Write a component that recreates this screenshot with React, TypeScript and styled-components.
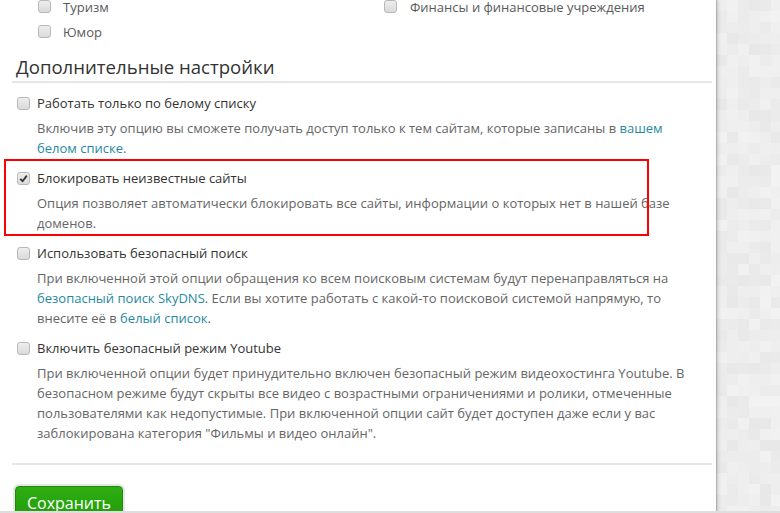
import React from "react";
import styled, { createGlobalStyle } from "styled-components";

const Global = createGlobalStyle`
  html, body { margin: 0; padding: 0; background: #fff; }
  body { width: 780px; height: 513px; overflow: hidden; font-family: "Open Sans", "Liberation Sans", sans-serif; }
`;

const Page = styled.div`
  display: flex;
  flex-direction: column;
  width: 780px;
  height: 513px;
`;

const Main = styled.div`
  display: flex;
  height: 511px;
  overflow: hidden;
`;

const Panel = styled.div`
  width: 716px;
  flex: none;
  background: #fff;
  box-shadow: 1px 0 1px rgba(0, 0, 0, 0.18), 3px 0 3px rgba(0, 0, 0, 0.1);
  position: relative;
  z-index: 1;
  padding: 0 4px 0 12px;
  box-sizing: border-box;
`;

const Backdrop = styled.div`
  flex: 1;
  background: #ebebeb;
  overflow: hidden;
  svg { display: block; }
`;

const BottomLine = styled.div`
  height: 2px;
  background: #dedede;
`;

const CatGrid = styled.div`
  display: grid;
  grid-template-columns: 346px 1fr;
  margin-top: -6px;
  padding-left: 26px;
`;

const CatItem = styled.label<{ $gap: number }>`
  display: flex;
  align-items: center;
  gap: ${(p) => p.$gap}px;
  height: 25px;
  font-size: 13px;
  color: #5a5a5a;
`;

const Box = styled.span`
  width: 11px;
  height: 11px;
  flex: none;
  border: 1px solid #b8b8b8;
  border-radius: 3px;
  background: linear-gradient(#eeeeee, #dadada);
  display: flex;
  align-items: center;
  justify-content: center;
  svg { display: block; }
`;

const Heading = styled.h2`
  margin: 0;
  padding: 9px 0 0 4px;
  height: 39px;
  box-sizing: border-box;
  font-size: 18.6px;
  font-weight: 400;
  color: #333;
  line-height: 28px;
  border-bottom: 2px solid #e6e6e6;
`;

const Options = styled.div`
  display: flex;
  flex-direction: column;
  padding: 3px 0 17px 0;
  border-bottom: 2px solid #e6e6e6;
`;

const Option = styled.div`
  position: relative;
  padding: 7px 0 3px 5px;
`;

const Highlight = styled.div`
  position: absolute;
  left: -8px;
  top: -2px;
  bottom: 0;
  right: 63px;
  border: 2.5px solid #ff0000;
  pointer-events: none;
`;

const OptLabel = styled.label`
  display: flex;
  align-items: center;
  gap: 7px;
  height: 20px;
  font-size: 13px;
  color: #333;
`;

const Desc = styled.p`
  margin: 5px 10px 0 20px;
  font-size: 13px;
  line-height: 20px;
  color: #666;
`;

const Link = styled.a`
  color: #1f8aa0;
  text-decoration: none;
`;

const ButtonRow = styled.div`
  padding: 21px 0 0 3px;
`;

const SaveButton = styled.button`
  font-family: "Open Sans", "Liberation Sans", sans-serif;
  font-size: 16px;
  color: #fff;
  background: linear-gradient(#2fae12, #1f9a08);
  border: 1px solid #1d8a0a;
  border-radius: 4px;
  box-shadow: 0 0 0 2px #e6e6e6;
  padding: 5px 0 8px;
  width: 108px;
  cursor: pointer;
`;

function Check({ checked }: { checked?: boolean }) {
  return (
    <Box>
      {checked && (
        <svg width="9" height="9" viewBox="0 0 9 9">
          <path d="M1.2 4.8 L3.6 7.2 L7.8 1.6" fill="none" stroke="#333" strokeWidth="1.8" />
        </svg>
      )}
    </Box>
  );
}

function Mosaic() {
  const cells: React.ReactNode[] = [];
  let seed = 11;
  const rnd = () => {
    seed = (seed * 9301 + 49297) % 233280;
    return seed / 233280;
  };
  for (let r = 0; r < 48; r++) {
    for (let c = 0; c < 7; c++) {
      const v = Math.round(232 + rnd() * 10);
      cells.push(
        <rect key={r + "-" + c} x={c * 11} y={r * 11} width={11} height={11} fill={`rgb(${v},${v},${v})`} />
      );
    }
  }
  return (
    <svg width="77" height="528" viewBox="0 0 77 528">
      {cells}
    </svg>
  );
}

export default function App() {
  return (
    <Page>
      <Global />
      <Main>
        <Panel>
          <CatGrid>
            <CatItem $gap={12}><Check />Туризм</CatItem>
            <CatItem $gap={13}><Check />Финансы и финансовые учреждения</CatItem>
            <CatItem $gap={12}><Check />Юмор</CatItem>
          </CatGrid>
          <Heading>Дополнительные настройки</Heading>
          <Options>
            <Option>
              <OptLabel><Check />Работать только по белому списку</OptLabel>
              <Desc>
                Включив эту опцию вы сможете получать доступ только к тем сайтам, которые записаны в{" "}
                <Link href="#">вашем белом списке</Link>.
              </Desc>
            </Option>
            <Option>
              <Highlight />
              <OptLabel><Check checked />Блокировать неизвестные сайты</OptLabel>
              <Desc>
                Опция позволяет автоматически блокировать все сайты, информации о которых нет в нашей базе доменов.
              </Desc>
            </Option>
            <Option>
              <OptLabel><Check />Использовать безопасный поиск</OptLabel>
              <Desc>
                При включенной этой опции обращения ко всем поисковым системам будут перенаправляться на{" "}
                <Link href="#">безопасный поиск SkyDNS</Link>. Если вы хотите работать с какой-то поисковой системой
                напрямую, то внесите её в <Link href="#">белый список</Link>.
              </Desc>
            </Option>
            <Option>
              <OptLabel><Check />Включить безопасный режим Youtube</OptLabel>
              <Desc>
                При включенной опции будет принудительно включен безопасный режим видеохостинга Youtube. В безопасном
                режиме будут скрыты все видео с возрастными ограничениями и ролики, отмеченные пользователями как
                недопустимые. При включенной опции сайт будет доступен даже если у вас заблокирована категория "Фильмы
                и видео онлайн".
              </Desc>
            </Option>
          </Options>
          <ButtonRow>
            <SaveButton>Сохранить</SaveButton>
          </ButtonRow>
        </Panel>
        <Backdrop>
          <Mosaic />
        </Backdrop>
      </Main>
      <BottomLine />
    </Page>
  );
}
